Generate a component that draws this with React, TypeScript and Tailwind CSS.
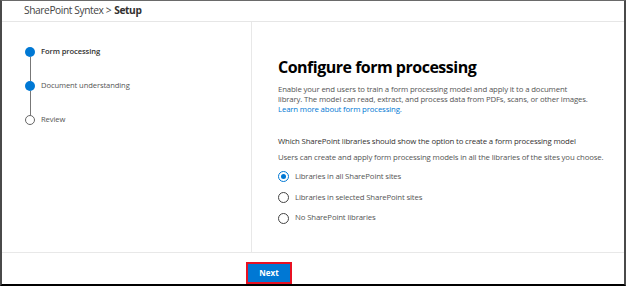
import { useState } from "react";

const steps = [
  { label: "Form processing", done: true, current: true },
  { label: "Document understanding", done: true, current: false },
  { label: "Review", done: false, current: false },
];

const options = [
  "Libraries in all SharePoint sites",
  "Libraries in selected SharePoint sites",
  "No SharePoint libraries",
];

export default function App() {
  const [choice, setChoice] = useState(0);

  return (
    <main
      className="w-[626px] h-[286px] bg-white flex flex-col border-l-2 border-r-2 border-b-2 border-t border-l-[#4a4a4a] border-r-[#4a4a4a] border-b-black border-t-[#6a6a6a] text-[#323130] overflow-hidden"
      style={{ fontFamily: '"Open Sans", "Noto Sans", sans-serif' }}
    >
      <header className="h-[21px] shrink-0 border-b border-[#e6e6e6] pl-[22px] flex items-center text-[10.2px] tracking-[-0.4px] text-[#444]">
        SharePoint Syntex &gt; <span className="font-bold text-[#323130] ml-[3px]">Setup</span>
      </header>

      <div className="flex flex-1 min-h-0">
        <aside className="w-[250px] shrink-0 border-r border-[#e8e8e8] pl-[23px] pt-[25px]">
          {steps.map((s, i) => (
            <div key={s.label} className="flex flex-col">
              <div className="flex items-center gap-[6px] h-[10px]">
                <span
                  className={
                    s.done
                      ? "w-[10px] h-[10px] rounded-full bg-[#0078d4]"
                      : "w-[10px] h-[10px] rounded-full border border-[#666] bg-white"
                  }
                />
                <span
                  className={
                    s.current
                      ? "text-[7.6px] font-semibold text-[#323130] tracking-[-0.1px]"
                      : "text-[7.6px] text-[#555] tracking-[-0.1px]"
                  }
                >
                  {s.label}
                </span>
              </div>
              {i < steps.length - 1 && <div className="ml-[4.5px] w-px h-[24px] bg-[#777]" />}
            </div>
          ))}
        </aside>

        <section className="flex-1 pl-[26px] pt-[34px] pr-[16px]">
          <h1 className="text-[16px] font-bold text-black leading-[22px] tracking-[-0.5px]">
            Configure form processing
          </h1>
          <p className="mt-[6px] text-[7.8px] leading-[10px] text-[#555] tracking-[-0.15px] whitespace-nowrap">
            Enable your end users to train a form processing model and apply it to a document
            <br />
            library. The model can read, extract, and process data from PDFs, scans, or other images.
            <br />
            <a className="text-[#0078d4]">Learn more about form processing.</a>
          </p>
          <p className="mt-[22px] text-[7.8px] leading-[10px] text-[#323130] font-medium tracking-[-0.15px] whitespace-nowrap">
            Which SharePoint libraries should show the option to create a form processing model
          </p>
          <p className="mt-[6px] text-[7.8px] leading-[10px] text-[#555] tracking-[-0.15px] whitespace-nowrap">
            Users can create and apply form processing models in all the libraries of the sites you choose.
          </p>
          <div className="mt-[9px] flex flex-col gap-[9px]">
            {options.map((o, i) => (
              <label key={o} className="flex items-center gap-[6px] cursor-pointer" onClick={() => setChoice(i)}>
                <span
                  className={
                    choice === i
                      ? "w-[11px] h-[11px] rounded-full border border-[#0078d4] flex items-center justify-center"
                      : "w-[11px] h-[11px] rounded-full border border-[#444]"
                  }
                >
                  {choice === i && <span className="w-[5px] h-[5px] rounded-full bg-[#0078d4]" />}
                </span>
                <span className="text-[7.8px] text-[#555] tracking-[-0.15px]">{o}</span>
              </label>
            ))}
          </div>
        </section>
      </div>

      <footer className="h-[32px] shrink-0 border-t border-[#e8e8e8] flex items-end pl-[244px]">
        <button className="w-[46px] h-[22px] bg-[#0078d4] border-2 border-[#e81123] text-white text-[8px] font-bold">
          Next
        </button>
      </footer>
    </main>
  );
}
